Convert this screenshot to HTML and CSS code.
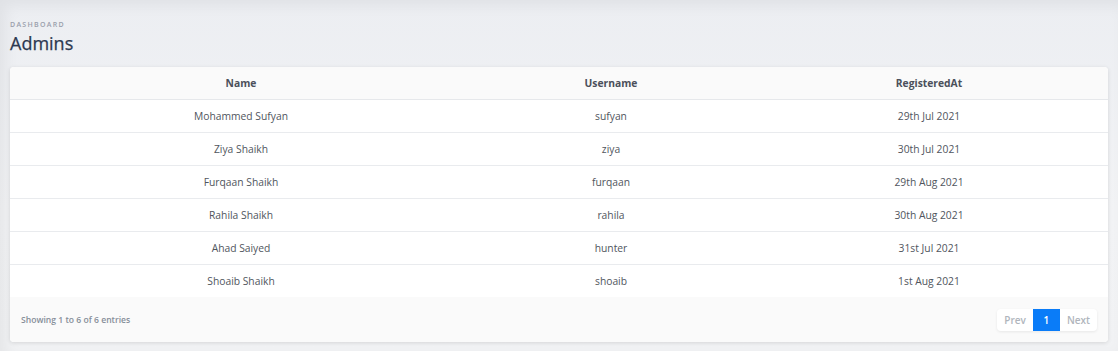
FILE: index.html
```html
<!DOCTYPE html>
<html lang="en">
<head>
<meta charset="utf-8">
<title>Admins</title>
<link rel="stylesheet" href="styles.css">
</head>
<body>
<div class="page">
  <header class="page-header">
    <div class="pretitle">Dashboard</div>
    <h1 class="page-title">Admins</h1>
  </header>
  <section class="card">
    <table class="table">
      <colgroup>
        <col class="c-name"><col class="c-user"><col class="c-date">
      </colgroup>
      <thead>
        <tr><th>Name</th><th>Username</th><th>RegisteredAt</th></tr>
      </thead>
      <tbody>
        <tr><td>Mohammed Sufyan</td><td>sufyan</td><td>29th Jul 2021</td></tr>
        <tr><td>Ziya Shaikh</td><td>ziya</td><td>30th Jul 2021</td></tr>
        <tr><td>Furqaan Shaikh</td><td>furqaan</td><td>29th Aug 2021</td></tr>
        <tr><td>Rahila Shaikh</td><td>rahila</td><td>30th Aug 2021</td></tr>
        <tr><td>Ahad Saiyed</td><td>hunter</td><td>31st Jul 2021</td></tr>
        <tr><td>Shoaib Shaikh</td><td>shoaib</td><td>1st Aug 2021</td></tr>
      </tbody>
    </table>
    <footer class="card-footer">
      <span class="entries">Showing 1 to 6 of 6 entries</span>
      <nav class="pagination">
        <span class="page-btn disabled">Prev</span>
        <span class="page-btn active">1</span>
        <span class="page-btn disabled">Next</span>
      </nav>
    </footer>
  </section>
</div>
</body>
</html>
```
FILE: styles.css
```css
html, body {
  margin: 0;
  padding: 0;
}
body {
  background: #eef0f3;
  font-family: "Open Sans", "Liberation Sans", sans-serif;
  color: #495057;
  height: 351px;
  overflow: hidden;
}
.page {
  height: 351px;
  box-sizing: border-box;
  padding: 20px 10px 0 10px;
  background: linear-gradient(180deg, #eceef2 0%, #f2f3f5 60%, #f1f2f4 100%);
  box-shadow: inset 6px 6px 14px rgba(0,0,0,0.05);
}
.page-header {
  height: 47px;
}
.pretitle {
  font-size: 7px;
  letter-spacing: 1.3px;
  text-transform: uppercase;
  color: #9aa0ac;
  line-height: 10px;
  font-weight: 600;
}
.page-title {
  margin: 1px 0 0 0;
  font-size: 18px;
  font-weight: 500;
  color: #2c3850;
  line-height: 24px;
  -webkit-text-stroke: 0.25px #2c3850;
}
.card {
  width: 1098px;
  background: #fff;
  border-radius: 4px;
  box-shadow: 0 1px 4px rgba(0,0,0,0.12);
  overflow: hidden;
}
.table {
  width: 100%;
  border-collapse: collapse;
  table-layout: fixed;
}
.c-name { width: 462px; }
.c-user { width: 278px; }
.c-date { width: 358px; }
.table th, .table td {
  text-align: center;
  font-size: 10.3px;
  padding: 0;
}
.table th {
  height: 32px;
  background: #fafafa;
  font-weight: 700;
  color: #4b505a;
  border-bottom: 1px solid #e6e8eb;
}
.table td {
  height: 32px;
  font-weight: 500;
  color: #50555d;
  border-bottom: 1px solid #e9ebee;
}
.table tbody tr:last-child td {
  border-bottom: none;
}
.card-footer {
  background: #fafafa;
  height: 45px;
  display: flex;
  align-items: center;
  justify-content: space-between;
  padding: 0 11px;
}
.entries {
  font-size: 8.6px;
  color: #868e99;
  font-weight: 600;
}
.pagination {
  display: flex;
  background: #fff;
  border-radius: 4px;
  box-shadow: 0 1px 3px rgba(0,0,0,0.08);
  overflow: hidden;
}
.page-btn {
  font-size: 10px;
  font-weight: 600;
  height: 22px;
  line-height: 22px;
  padding: 0 7px;
  color: #b0b5bc;
}
.page-btn.active {
  background: #0a7cf8;
  color: #fff;
  width: 27px;
  padding: 0;
  text-align: center;
}
```
